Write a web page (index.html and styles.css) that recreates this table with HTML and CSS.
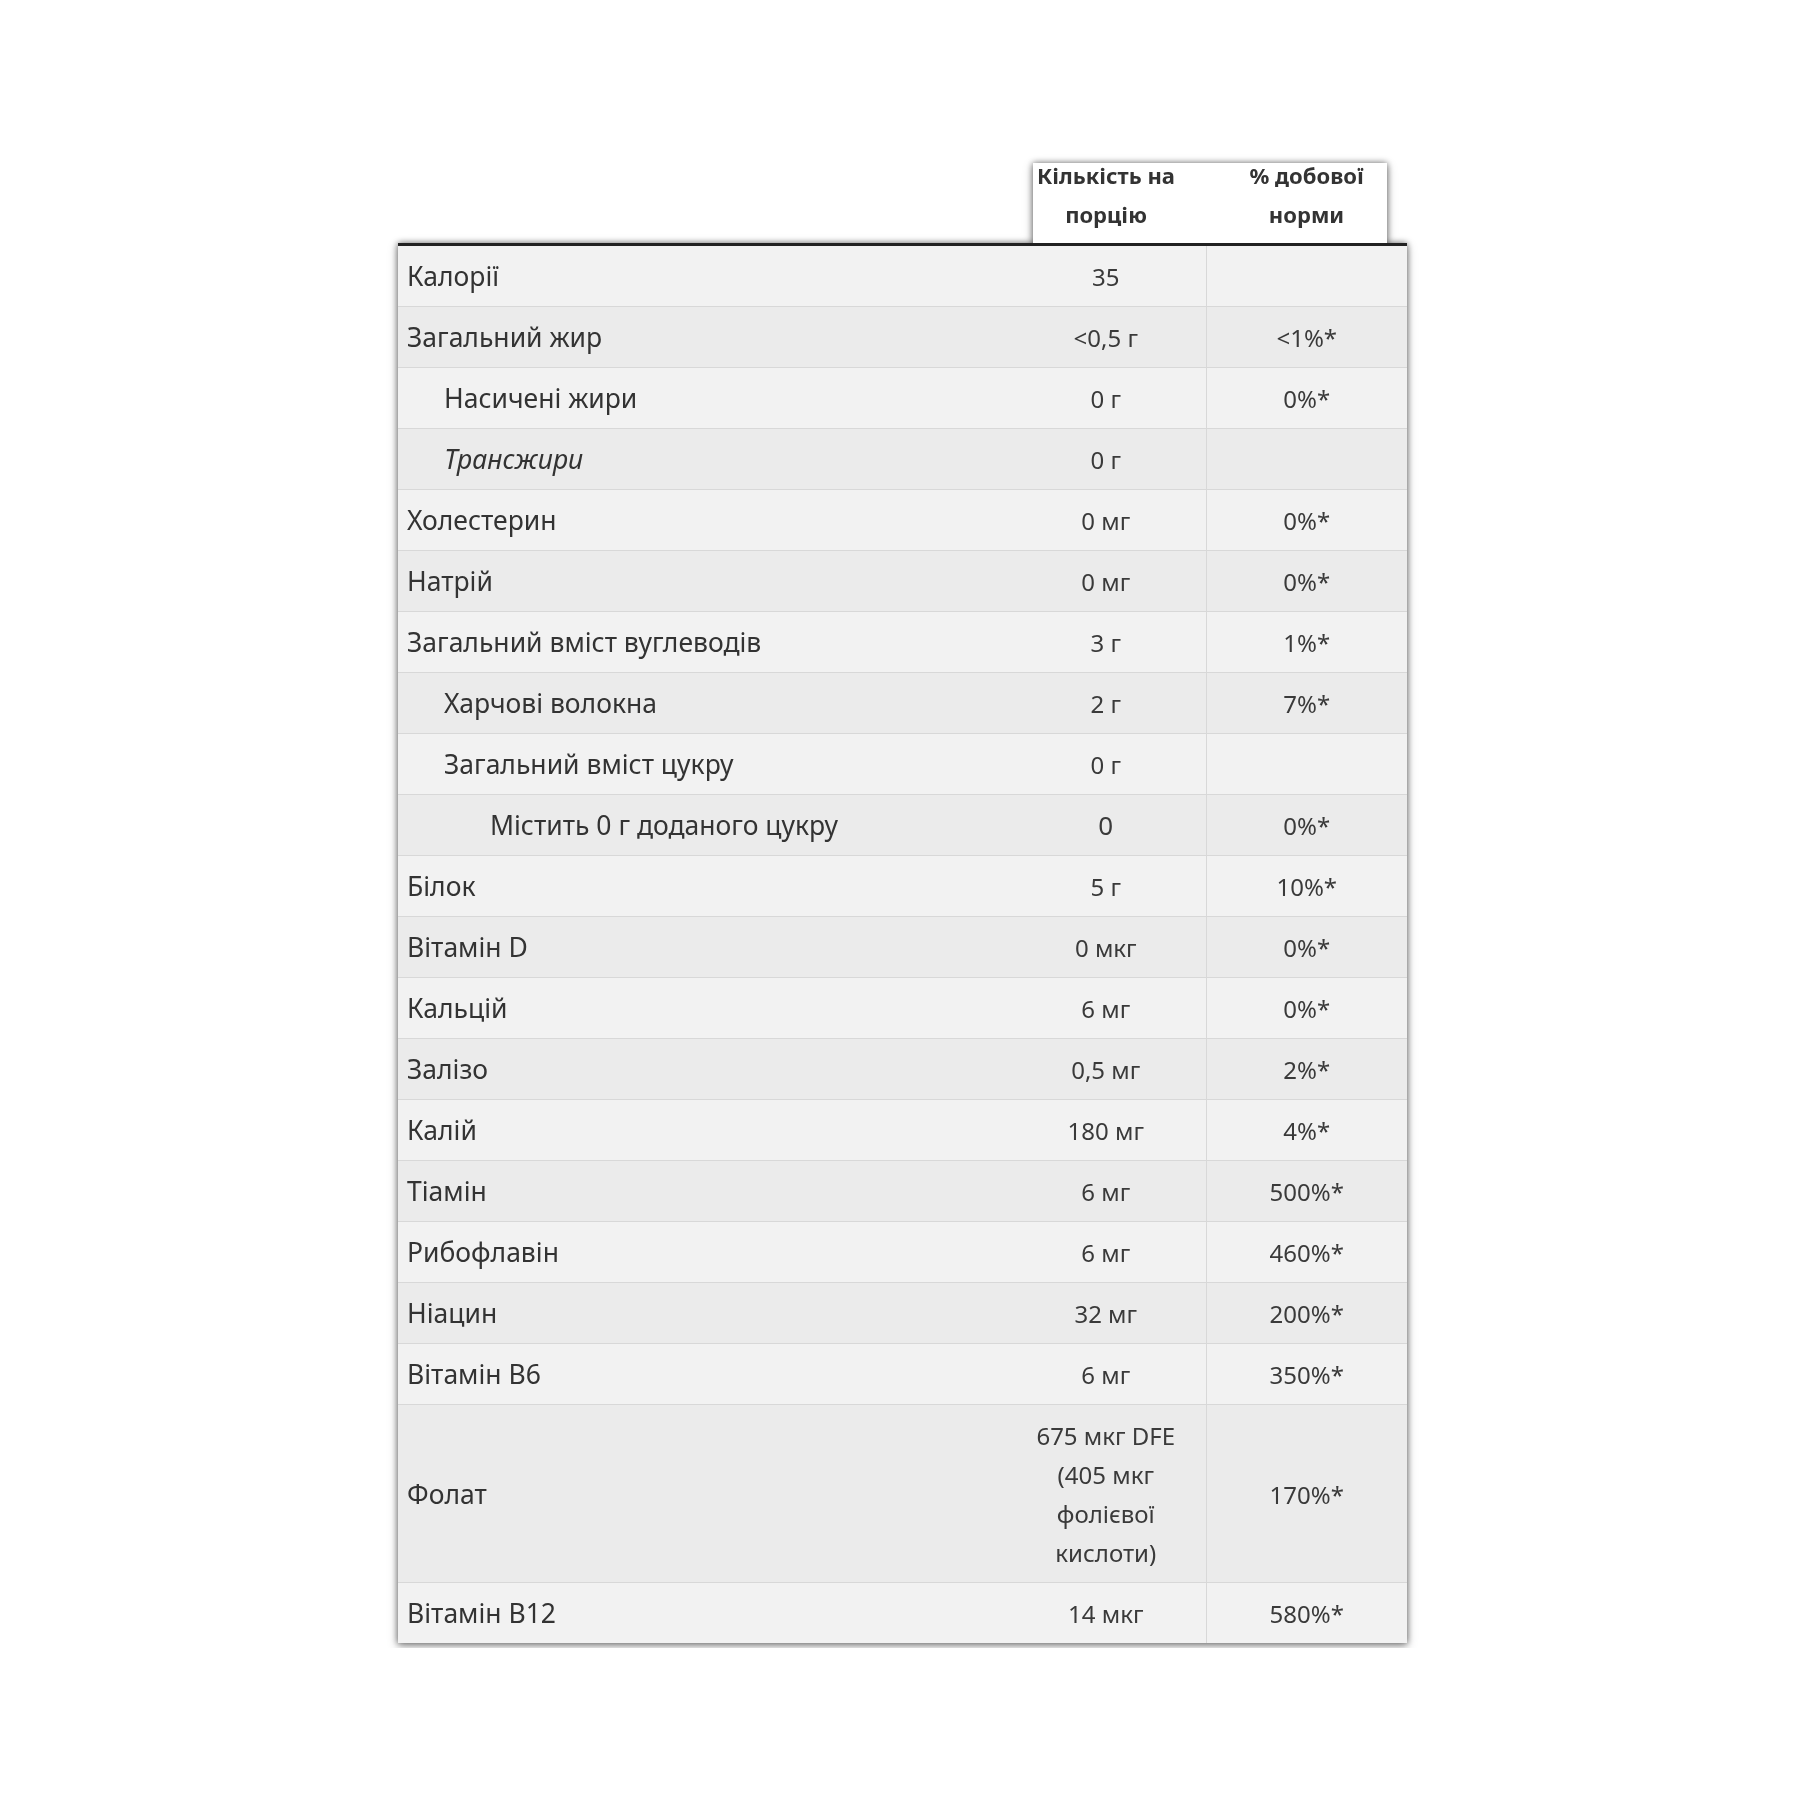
FILE: index.html
```html
<!DOCTYPE html>
<html lang="uk">
<head>
  <meta charset="UTF-8">
  <title>Харчова цінність</title>
  <link rel="stylesheet" href="styles.css">
</head>
<body>
<div class="page">
  <div class="facts-wrap">
    <table class="facts">
      <thead>
        <tr>
          <th class="blank"></th>
          <th class="head-amount">Кількість на порцію</th>
          <th class="head-dv">% добової норми</th>
        </tr>
      </thead>
      <tbody>
        <tr><td class="name">Калорії</td><td class="amount">35</td><td class="dv"></td></tr>
        <tr><td class="name">Загальний жир</td><td class="amount">&lt;0,5 г</td><td class="dv">&lt;1%*</td></tr>
        <tr><td class="name sub">Насичені жири</td><td class="amount">0 г</td><td class="dv">0%*</td></tr>
        <tr><td class="name sub"><em>Трансжири</em></td><td class="amount">0 г</td><td class="dv"></td></tr>
        <tr><td class="name">Холестерин</td><td class="amount">0 мг</td><td class="dv">0%*</td></tr>
        <tr><td class="name">Натрій</td><td class="amount">0 мг</td><td class="dv">0%*</td></tr>
        <tr><td class="name">Загальний вміст вуглеводів</td><td class="amount">3 г</td><td class="dv">1%*</td></tr>
        <tr><td class="name sub">Харчові волокна</td><td class="amount">2 г</td><td class="dv">7%*</td></tr>
        <tr><td class="name sub">Загальний вміст цукру</td><td class="amount">0 г</td><td class="dv"></td></tr>
        <tr><td class="name subsub">Містить 0 г доданого цукру</td><td class="amount big">0</td><td class="dv">0%*</td></tr>
        <tr><td class="name">Білок</td><td class="amount">5 г</td><td class="dv">10%*</td></tr>
        <tr><td class="name">Вітамін D</td><td class="amount">0 мкг</td><td class="dv">0%*</td></tr>
        <tr><td class="name">Кальцій</td><td class="amount">6 мг</td><td class="dv">0%*</td></tr>
        <tr><td class="name">Залізо</td><td class="amount">0,5 мг</td><td class="dv">2%*</td></tr>
        <tr><td class="name">Калій</td><td class="amount">180 мг</td><td class="dv">4%*</td></tr>
        <tr><td class="name">Тіамін</td><td class="amount">6 мг</td><td class="dv">500%*</td></tr>
        <tr><td class="name">Рибофлавін</td><td class="amount">6 мг</td><td class="dv">460%*</td></tr>
        <tr><td class="name">Ніацин</td><td class="amount">32 мг</td><td class="dv">200%*</td></tr>
        <tr><td class="name">Вітамін B6</td><td class="amount">6 мг</td><td class="dv">350%*</td></tr>
        <tr><td class="name">Фолат</td><td class="amount">675 мкг DFE (405 мкг фолієвої кислоти)</td><td class="dv">170%*</td></tr>
        <tr><td class="name">Вітамін B12</td><td class="amount">14 мкг</td><td class="dv">580%*</td></tr>
      </tbody>
    </table>
  </div>
</div>
</body>
</html>
```

FILE: styles.css
```css
body {
  margin: 0;
  background: #fff;
  font-family: "Noto Sans", "Open Sans", sans-serif;
  color: #333;
}

.page {
  padding: 156px 0 0 398px;
}

.facts-wrap {
  display: inline-block;
  filter: drop-shadow(0 0 3px rgba(0,0,0,0.5)) drop-shadow(0 3px 4px rgba(0,0,0,0.3));
}

.facts {
  width: 1009px;
  border-collapse: collapse;
  table-layout: fixed;
}

.facts th {
  font-size: 22px;
  font-weight: bold;
  line-height: 39px;
  padding: 0 22px 9px;
  text-align: center;
  color: #333;
  border-bottom: 3px solid #222;
  width: 156px;
  background-color: transparent;
  background-image: linear-gradient(#fff, #fff);
  background-repeat: no-repeat;
}

.facts th.blank {
  background-image: none;
  width: auto;
}

/* white header area is a bit narrower than the columns */
.facts th.head-amount {
  background-position: 27px 7px;
  background-size: 100% 100%;
}

.facts th.head-dv {
  width: 157px;
  background-position: 0 7px;
  background-size: calc(100% - 20px) 100%;
}

.facts td {
  line-height: 39px;
  padding: 11px 22px 10px;
  border-bottom: 1px solid #d8d8d8;
  vertical-align: middle;
}

.facts tbody tr:nth-child(odd) td {
  background: #f2f2f2;
}

.facts tbody tr:nth-child(even) td {
  background: #ebebeb;
}

.facts tbody tr:last-child td {
  border-bottom: none;
}

.name {
  font-size: 26.5px;
  padding-left: 9px !important;
}

.name.sub {
  padding-left: 46px !important;
}

.name.subsub {
  padding-left: 92px !important;
}

.amount {
  font-size: 24px;
  text-align: center;
  color: #3a3a3a;
}

.amount.big {
  font-size: 26px;
}

.dv {
  font-size: 24px;
  text-align: center;
  color: #3a3a3a;
  border-left: 1px solid #d8d8d8;
}
```
